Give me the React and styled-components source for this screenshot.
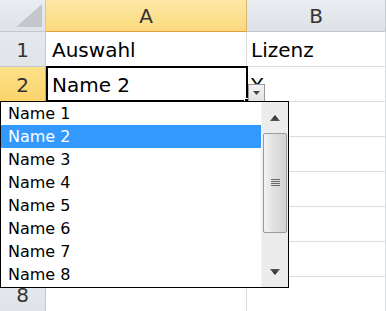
import React from 'react'
import styled, { createGlobalStyle } from 'styled-components'

const Global = createGlobalStyle`
  html, body { margin: 0; padding: 0; background: #fff; overflow: hidden; }
  body { font-family: "DejaVu Sans", "Liberation Sans", sans-serif; }
`

const Sheet = styled.div`
  position: relative;
  width: 386px;
  height: 311px;
  overflow: hidden;
  display: grid;
  grid-template-columns: 46px 201px 139px;
  grid-template-rows: 32px repeat(8, 35px);
`

const Corner = styled.div`
  background: linear-gradient(#e9ecf0, #dfe3e8);
  border-right: 1px solid #c4c9cf;
  border-bottom: 1px solid #c4c9cf;
  display: flex;
  align-items: flex-end;
  justify-content: flex-end;
  padding: 0 3px 4px 0;
`

const ColHead = styled.div`
  background: ${p => p.$sel ? 'linear-gradient(#fde9a6, #fbd97d)' : 'linear-gradient(#e9ecf0, #dee2e7)'};
  border-right: 1px solid ${p => p.$sel ? '#d9b66a' : '#c4c9cf'};
  border-bottom: 1px solid ${p => p.$sel ? '#e0a13c' : '#c4c9cf'};
  color: #333;
  font-size: 20px;
  display: flex;
  align-items: center;
  justify-content: center;
`

const RowHead = styled.div`
  background: ${p => p.$sel ? 'linear-gradient(#fde08a, #fbd46a)' : 'linear-gradient(#e6e9ed, #e0e4e8)'};
  border-right: 1px solid ${p => p.$sel ? '#e0a13c' : '#c4c9cf'};
  border-bottom: 1px solid ${p => p.$sel ? '#d9b66a' : '#c4c9cf'};
  color: #333;
  font-size: 20px;
  display: flex;
  align-items: center;
  justify-content: center;
  padding-top: 2px;
`

const Cell = styled.div`
  border-right: 1px solid #dadcdd;
  border-bottom: 1px solid #dadcdd;
  color: #000;
  font-size: 20px;
  display: flex;
  align-items: center;
  padding-left: ${p => p.$pad || 6}px;
  padding-top: 2px;
  white-space: nowrap;
  overflow: hidden;
`

const ActiveCell = styled.div`
  position: absolute;
  left: 46px;
  top: 66px;
  width: 202px;
  height: 36px;
  box-sizing: border-box;
  border: 2px solid #000;
  font-size: 20px;
  display: flex;
  align-items: center;
  padding-left: 4px;
  padding-top: 2px;
  background: #fff;
`

const FillHandle = styled.div`
  position: absolute;
  right: -5px;
  bottom: -5px;
  width: 5px;
  height: 5px;
  background: #000;
  border: 1px solid #fff;
`

const DropButton = styled.div`
  position: absolute;
  left: 248px;
  top: 84px;
  width: 15px;
  height: 16px;
  background: linear-gradient(#f4f4f4, #e2e2e2);
  border: 1px solid #9a9a9a;
  display: flex;
  align-items: center;
  justify-content: center;
`

const List = styled.div`
  position: absolute;
  left: 0;
  top: 101px;
  width: 287px;
  height: 185px;
  border: 1px solid #000;
  background: #fff;
  display: flex;
`

const Items = styled.div`
  flex: 1;
  display: flex;
  flex-direction: column;
`

const Item = styled.div`
  height: 23px;
  display: flex;
  align-items: center;
  padding-left: 7px;
  font-size: 16px;
  color: ${p => p.$sel ? '#fff' : '#000'};
  background: ${p => p.$sel ? '#3399ff' : 'transparent'};
`

const Scrollbar = styled.div`
  width: 26px;
  background: #ececec;
  border-left: 1px solid #f4f4f4;
  display: flex;
  flex-direction: column;
`

const Arrow = styled.div`
  height: 31px;
  display: flex;
  align-items: center;
  justify-content: center;
`

const Track = styled.div`
  flex: 1;
  padding: 0 1px;
  display: flex;
  flex-direction: column;
`

const Thumb = styled.div`
  height: 98px;
  border: 1px solid #9b9b9b;
  border-radius: 2px;
  background: linear-gradient(90deg, #f3f3f3, #e0e0e0 45%, #d3d3d3);
  display: flex;
  align-items: center;
  justify-content: center;
`

const Tri = ({ up }) => (
  <svg width="10" height="6" viewBox="0 0 10 6">
    <defs>
      <linearGradient id={up ? 'gu' : 'gd'} x1="0" y1="0" x2="0" y2="1">
        <stop offset="0" stopColor={up ? '#222' : '#555'} />
        <stop offset="1" stopColor={up ? '#555' : '#222'} />
      </linearGradient>
    </defs>
    <polygon points={up ? '5,0 10,6 0,6' : '0,0 10,0 5,6'} fill={`url(#${up ? 'gu' : 'gd'})`} />
  </svg>
)

const Grip = () => (
  <svg width="9" height="8" viewBox="0 0 9 8">
    {[0, 2, 4, 6].map(y => (
      <rect key={y} x="0" y={y} width="9" height="1" fill="#6a6a6a" />
    ))}
  </svg>
)

const names = ['Name 1', 'Name 2', 'Name 3', 'Name 4', 'Name 5', 'Name 6', 'Name 7', 'Name 8']

// rows 3-7 sit under the open list, so only their frame is drawn
const rows = [
  { n: '1', a: 'Auswahl', b: 'Lizenz' },
  { n: '2', a: '', b: 'Y', sel: true },
  { n: '' }, { n: '' }, { n: '' }, { n: '' }, { n: '' },
  { n: '8' },
]

export default function App() {
  return (
    <>
      <Global />
      <Sheet>
        <Corner>
          <svg width="26" height="23" viewBox="0 0 26 23">
            <polygon points="26,0 26,23 0,23" fill="#c3c7cc" />
          </svg>
        </Corner>
        <ColHead $sel>A</ColHead>
        <ColHead>B</ColHead>
        {rows.map((r, i) => (
          <React.Fragment key={i}>
            <RowHead $sel={r.sel}>{r.n}</RowHead>
            <Cell>{r.a}</Cell>
            <Cell $pad={4}>{r.b}</Cell>
          </React.Fragment>
        ))}

        <ActiveCell>
          Name 2
          <FillHandle />
        </ActiveCell>
        <DropButton>
          <svg width="7" height="4" viewBox="0 0 7 4">
            <polygon points="0,0 7,0 3.5,4" fill="#444" />
          </svg>
        </DropButton>

        <List>
          <Items>
            {names.map((n, i) => (
              <Item key={n} $sel={i === 1}>{n}</Item>
            ))}
          </Items>
          <Scrollbar>
            <Arrow><Tri up /></Arrow>
            <Track>
              <Thumb><Grip /></Thumb>
            </Track>
            <Arrow><Tri /></Arrow>
          </Scrollbar>
        </List>
      </Sheet>
    </>
  )
}
